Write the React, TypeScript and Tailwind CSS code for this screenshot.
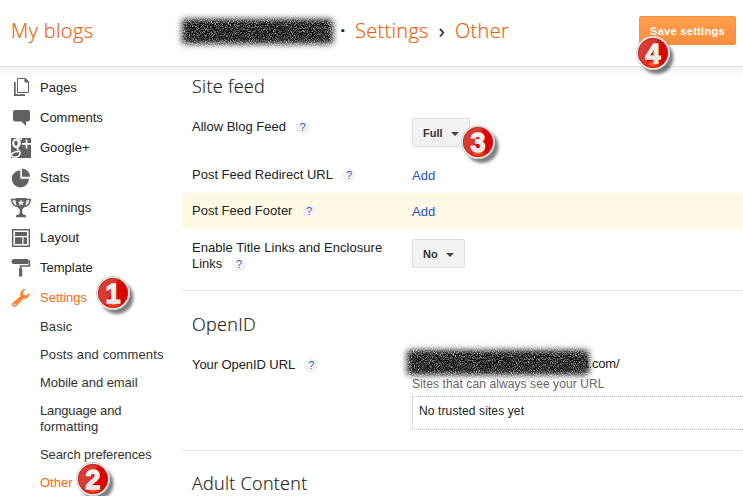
import React from 'react';

const sans = "font-['Liberation_Sans',Arial,sans-serif]";
const light = "font-['Open_Sans',sans-serif] font-light [-webkit-text-stroke:0.2px]";

function Badge({ n, className, size = 34 }: { n: string; className: string; size?: number }) {
  return (
    <svg className={`absolute z-10 overflow-visible ${className}`} width={size} height={size} viewBox="0 0 34 34">
      <defs>
        <linearGradient id={`g${n}`} x1="0" y1="0.1" x2="1" y2="0.6">
          <stop offset="0" stopColor="#d8453a" />
          <stop offset="0.5" stopColor="#d9352a" />
          <stop offset="0.52" stopColor="#dc0808" />
          <stop offset="1" stopColor="#dd0000" />
        </linearGradient>
        <linearGradient id={`d${n}`} x1="0" y1="0" x2="0" y2="1">
          <stop offset="0" stopColor="#ffffff" />
          <stop offset="1" stopColor="#dedede" />
        </linearGradient>
        <radialGradient id={`o${n}`}>
          <stop offset="0" stopColor="#ff7a3c" />
          <stop offset="1" stopColor="#ff5a20" stopOpacity="0" />
        </radialGradient>
        <filter id={`s${n}`} x="-30%" y="-30%" width="180%" height="180%">
          <feGaussianBlur stdDeviation="1.8" />
        </filter>
      </defs>
      <circle cx="21" cy="21.5" r="16.5" fill="#000" opacity="0.5" filter={`url(#s${n})`} />
      <circle cx="17" cy="17" r="17" fill="#f6f6f6" />
      <circle cx="17" cy="17" r="16.5" fill="none" stroke="#c8c4c4" strokeWidth="0.8" />
      <circle cx="17" cy="17" r="14.8" fill={`url(#g${n})`} stroke="#b51a16" strokeWidth="0.8" />
      <ellipse cx="17" cy="28" rx="9" ry="4.5" fill={`url(#o${n})`} />
      <text x="17" y="26.5" textAnchor="middle" fontSize="27" fontWeight="bold" fontFamily="Liberation Sans, Arial, sans-serif" fill={`url(#d${n})`} stroke="#ececec" strokeWidth="1.3">{n}</text>
    </svg>
  );
}

function Redaction({ w, h, id, className }: { w: number; h: number; id: string; className: string }) {
  return (
    <svg className={`absolute overflow-visible ${className}`} width={w} height={h} aria-hidden="true">
      <defs>
        <filter id={id} filterUnits="userSpaceOnUse" x="-12" y="-12" width={w + 24} height={h + 24} colorInterpolationFilters="sRGB">
          <feGaussianBlur in="SourceGraphic" stdDeviation="3.2" result="soft" />
          <feTurbulence type="fractalNoise" baseFrequency="0.95" numOctaves="2" seed="7" />
          <feColorMatrix values="0 0 0 0 0  0 0 0 0 0  0 0 0 0 0  -1.7 0 0 0 1.68" result="grain" />
          <feComposite in="soft" in2="grain" operator="in" />
        </filter>
      </defs>
      <rect x="1" y="1" width={w - 2} height={h - 2} rx="4" filter={`url(#${id})`} />
    </svg>
  );
}

function Icon({ name }: { name: string }) {
  const g = '#616161';
  return (
    <svg width="22" height="22" viewBox="0 0 22 22" className="shrink-0" fill={g}>
      {name === 'Pages' && (
        <g fill="none" stroke={g}>
          <path d="M7.500 1.500h8l3 3v11h-11z" />
          <path d="M15 1.500v3.500h3.500z" fill={g} />
          <path d="M4.800 5v13.200H15" strokeWidth="1.700" />
        </g>
      )}
      {name === 'Comments' && <path d="M5 3h13a2 2 0 0 1 2 2v7.500a2 2 0 0 1-2 2h-2V19l-4.500-4.500H5a2 2 0 0 1-2-2V5a2 2 0 0 1 2-2z" />}
      {name === 'Google+' && (
        <>
          <path d="M1 1h20v20H1z" />
          <g fill="none" stroke="#fff">
            <ellipse cx="6" cy="6.300" rx="2.800" ry="3.800" strokeWidth="2" />
            <path d="M6 2h6M9 3c1.500 2 1 5-.8 7s-.7 2.500.8 3.800 1.500 5.200-1.500 6S2 20 1.500 18.500s1.500-4 7-4" strokeWidth="1.600" />
            <path d="M16.500 2.500v9M12 6.800h9" strokeWidth="1.700" />
          </g>
        </>
      )}
      {name === 'Stats' && (
        <>
          <path d="M10.300 3.200v8.500H19A8.600 8.600 0 1 1 10.300 3.200z" />
          <path d="M12 1.500a8.200 8.200 0 0 1 8 8.200h-8z" />
        </>
      )}
      {name === 'Earnings' && (
        <>
          <path d="M5.500 1h11c0 6-1 9-4.200 11.200V16c0 1.500 2.700 1.500 3.700 2.500v1.800H6v-1.800c1-1 3.700-1 3.700-2.500v-3.800C6.500 10 5.500 7 5.500 1z" />
          <path d="M6 2.500H1.700c.4 4 2.200 6.500 6 7M16 2.500h4.300c-.4 4-2.200 6.500-6 7" fill="none" stroke={g} strokeWidth="1.500" />
          <path d="M11 2.500l1 2.300h2.500l-2 1.500.8 2.400-2.300-1.400-2.300 1.400.8-2.400-2-1.500H10z" fill="#fff" />
        </>
      )}
      {name === 'Layout' && (
        <>
          <path d="M2.700 2.700h16.600v16.600H2.700z" fill="none" stroke={g} strokeWidth="1.400" />
          <path d="M5 5h12v4H5zM5 10.300h7.300V17H5zM13.500 10.300H17V17h-3.500z" />
        </>
      )}
      {name === 'Template' && (
        <>
          <path d="M4 2h14v5H4a2.500 2.500 0 0 1 0-5zM9 11.500h3.200v8H9z" />
          <path d="M17 4.200h2.300v4.800h-8.700V12" fill="none" stroke={g} strokeWidth="1.700" />
        </>
      )}
      {name === 'Settings' && (
        <path fill="#ff8534" d="M2.300 16.200l8-7C9.700 5.500 11.500 2 16 1.800l-3 3.200.8 2.700 2.800.7 3-3c.5 4-2.800 7-6.300 6.300l-7.400 7.800c-2.200 1.500-5.100-1.200-3.600-3.300zm1.200 1.300a.900.900 0 1 0 1.800 0 .9.900 0 0 0-1.800 0z" />
      )}
    </svg>
  );
}

const nav = ['Pages', 'Comments', 'Google+', 'Stats', 'Earnings', 'Layout', 'Template', 'Settings'];

function Help() {
  return <span className="relative -top-[2px] ml-[6px] inline-flex h-[14px] w-[14px] items-center justify-center rounded-full bg-[#f3f3f5] align-[-2px] text-[11px] leading-none text-[#2a63cf]">?</span>;
}

function Select({ label, w }: { label: string; w: string }) {
  return (
    <button className={`flex h-[29px] items-center justify-between rounded-[2px] border border-[#dcdcdc] bg-linear-to-b from-[#f5f5f5] to-[#f1f1f1] pr-[10px] pl-[10px] text-[11px] font-bold text-[#333] ${w}`}>
      {label}
      <span className="mt-[2px] border-x-4 border-t-4 border-x-transparent border-t-[#444]" />
    </button>
  );
}

export default function App() {
  return (
    <div className={`relative h-[496px] w-[743px] overflow-hidden bg-white text-[13px] leading-4 text-[#222] ${sans}`}>
      <header className="relative flex h-[67px] items-center border-b border-[#e5e5e5] pb-[5px]">
        <h1 className={`w-[171px] pl-[11px] text-[20px] tracking-[0.36px] text-[#f0600a] ${light}`}>My blogs</h1>
        <div className="relative h-[26px] w-[169px]">
          <Redaction id="title" w={153} h={27} className="top-0 left-[10px]" />
        </div>
        <div className={`flex items-center text-[20px] tracking-[0.3px] text-[#f0600a] ${light}`}>
          <span className="w-[15px] font-semibold text-[#222]">·</span>
          <span>Settings</span>
          <span className="mx-[10px] font-normal text-[#222]">›</span>
          <span>Other</span>
        </div>
        <button className="absolute top-4 right-[7px] h-[29px] w-[97px] rounded-[2px] border border-[#fb8f3d] bg-linear-to-b from-[#ff9f4d] to-[#fb8d3d] text-[11px] font-bold tracking-[0.3px] whitespace-nowrap text-white">Save settings</button>
        <Badge n="4" className="top-[36px] left-[636px]" />
      </header>
      <div className="flex h-[429px]">
        <aside className="w-[182px] shrink-0 pt-[6px]">
          <nav>
            {nav.map((name) => (
              <a key={name} className={`flex h-[30px] items-center gap-2 pl-[10px] ${name === 'Settings' ? 'text-[#ff6a13]' : ''}`}>
                <Icon name={name} />
                {name}
              </a>
            ))}
          </nav>
          <ul className="pl-10 text-[#333]">
            <li className="py-[6px] tracking-[0.14px]">Basic</li>
            <li className="py-[6px] tracking-[0.12px]">Posts and comments</li>
            <li className="py-[6px] tracking-[-0.05px]">Mobile and email</li>
            <li className="py-[6px] tracking-[-0.15px]">Language and<br /><span className="tracking-[0.05px]">formatting</span></li>
            <li className="py-[6px] tracking-[-0.1px]">Search preferences</li>
            <li className="py-[6px] text-[#ff6a13]">Other</li>
          </ul>
        </aside>
        <main className="flex-1">
          <section className="h-[224px] border-b border-[#e5e5e5]">
            <h2 className={`h-[42px] pt-[9px] pl-[10px] text-[18px] leading-5 tracking-[0.3px] text-[#222] ${light}`}>Site feed</h2>
            <div className="flex h-[48px]">
              <div className="w-[230px] pt-[10px] pl-[10px]">Allow Blog Feed <Help /></div>
              <div className="pt-[9px]"><Select label="Full" w="w-[58px]" /></div>
            </div>
            <div className="flex h-[36px] items-center pt-px">
              <div className="w-[230px] pl-[10px]">Post Feed Redirect URL <Help /></div>
              <a className="text-[#1c53cf]">Add</a>
            </div>
            <div className="flex h-[36px] items-center bg-[#fff9e6] pt-px">
              <div className="w-[230px] pl-[10px]">Post Feed Footer <Help /></div>
              <a className="text-[#1c53cf]">Add</a>
            </div>
            <div className="flex">
              <div className="w-[230px] pt-[11px] pl-[10px]"><span className="tracking-[0.05px]">Enable Title Links and Enclosure</span><br />Links <Help /></div>
              <div className="pt-[10px]"><Select label="No" w="w-[53px]" /></div>
            </div>
          </section>
          <section className="h-[160px] border-b border-[#e5e5e5]">
            <h2 className={`h-[55px] pt-[23px] pl-[10px] text-[18px] leading-5 tracking-[0.3px] text-[#222] ${light}`}>OpenID</h2>
            <div className="flex pt-[10px]">
              <div className="w-[230px] pt-px pl-[10px] tracking-[-0.08px]">Your OpenID URL <Help /></div>
              <div className="relative flex-1">
                <div className="pl-[173px] tracking-[-0.15px]">t.com/</div>
                <Redaction id="url" w={184} h={27} className="-top-[7px] -left-[6px]" />
                <div className="pt-1 text-[12px] tracking-[0.09px] text-[#666]">Sites that can always see your URL</div>
                <div className="mt-1 h-[34px] border border-r-0 border-dotted border-[#bbb] pt-[6px] pl-[6px] text-[12px] tracking-[0.12px]">No trusted sites yet</div>
              </div>
            </div>
          </section>
          <h2 className={`pt-[22px] pl-[10px] text-[18px] leading-5 tracking-[0.28px] text-[#222] ${light}`}>Adult Content</h2>
        </main>
      </div>
      <div className="pointer-events-none absolute top-[67px] left-0 h-2 w-full bg-linear-to-b from-black/6 to-transparent" />
      <Badge n="1" className="top-[276px] left-[96px]" />
      <Badge n="2" className="top-[462px] left-[76px]" />
      <Badge n="3" className="top-[125px] left-[461px]" />
    </div>
  );
}
